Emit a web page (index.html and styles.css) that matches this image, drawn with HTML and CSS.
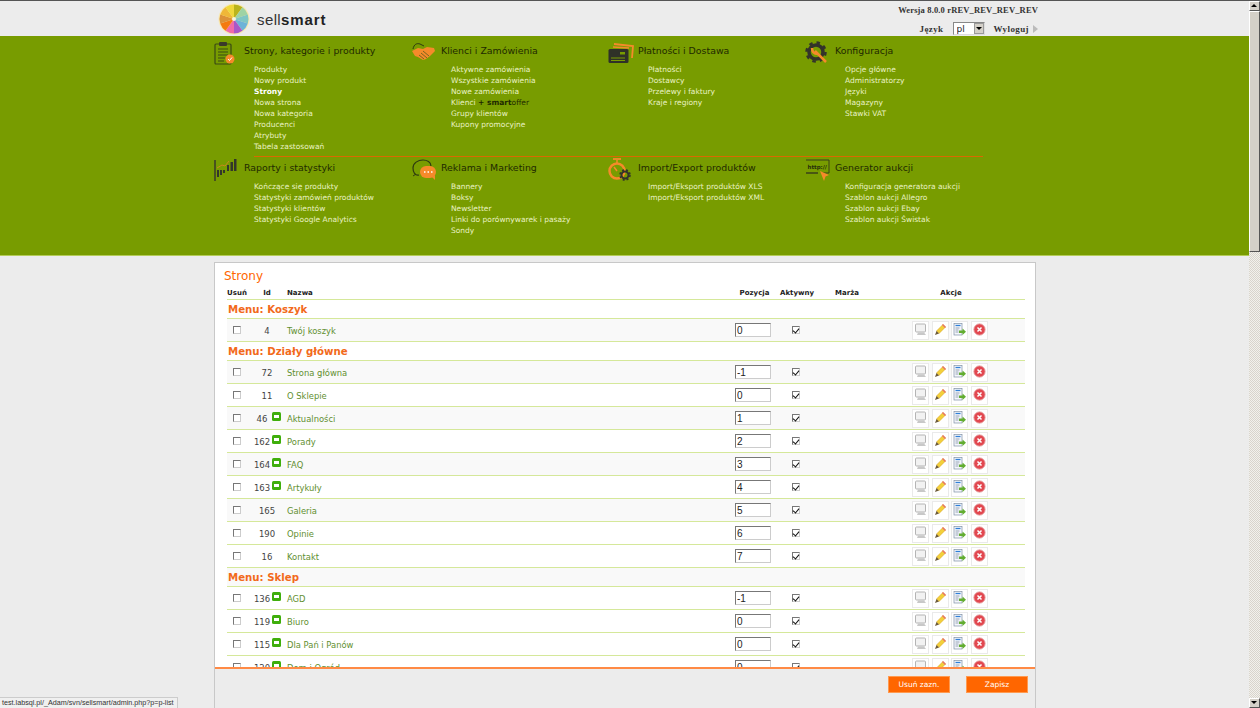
FILE: index.html
```html
<!DOCTYPE html>
<html lang="pl">
<head>
    <meta charset="UTF-8">
    <title>sellsmart - Strony</title>
    <link rel="stylesheet" href="styles.css">
</head>
<body>
    <svg class="sprites" width="0" height="0">
        <symbol id="i-comment" viewBox="0 0 13 13">
            <rect x="1.500" y="1" width="10" height="8" rx="1" fill="#f2f2f2" stroke="#b4b4b4"/>
            <path d="M4 9.500h6l2 2.500H3z" fill="#c8c8c8"/>
        </symbol>
        <symbol id="i-pencil" viewBox="0 0 13 13">
            <path d="M9 1.500l2.500 2.500-6.500 6.500L2.500 8z" fill="#f3d03a" stroke="#d8a520" stroke-width=".6"/>
            <path d="M9 1l3 3-1 1L8 2z" fill="#e8746a"/>
            <path d="M2.500 8l2.500 2.500L1 12z" fill="#6b5a3a"/>
        </symbol>
        <symbol id="i-move" viewBox="0 0 13 13">
            <rect x="1" y="0.500" width="8" height="11.500" fill="#f4f6fa" stroke="#7f90a6" stroke-width=".7"/>
            <path d="M2.500 2.500h5" stroke="#2f7fd8" stroke-width="1.300"/>
            <path d="M2.500 5h4M2.500 7h3M2.500 9h3" stroke="#7f90a6" stroke-width=".8"/>
            <path d="M6 7.500h3.500V5.500L13 8.700 9.500 12v-2H6z" fill="#62ad30"/>
        </symbol>
        <symbol id="i-delete" viewBox="0 0 13 13">
            <circle cx="6.500" cy="6.500" r="5.700" fill="#e2474f" stroke="#e8b0b0" stroke-width=".9"/>
            <path d="M4.500 4.500l4 4M8.500 4.500l-4 4" stroke="#fff" stroke-width="1.500"/>
        </symbol>
        <symbol id="i-sub" viewBox="0 0 9 9">
            <rect width="9" height="9" rx="1.500" fill="#3fae0c"/>
            <rect x="2" y="3" width="5" height="3" fill="#fff"/>
        </symbol>
    </svg>

    <div class="window">
        <div class="page">
            <header class="topbar">
                <div class="logo">
                    <svg class="logo-wheel" width="32" height="32" viewBox="0 0 32 32">
                        <circle cx="16" cy="16" r="15.500" fill="#f7e8b0"/>
                        <path d="M16 16L16 1.500A14.500 14.500 0 0 1 24.500 4.300z" fill="#b9b41c"/>
                        <path d="M16 16L24.500 4.300A14.500 14.500 0 0 1 29.800 11.500z" fill="#9ed3a4"/>
                        <path d="M16 16L29.800 11.500A14.500 14.500 0 0 1 29.800 20.500z" fill="#7fc6c4"/>
                        <path d="M16 16L29.800 20.500A14.500 14.500 0 0 1 24.500 27.700z" fill="#6db3d8"/>
                        <path d="M16 16L24.500 27.700A14.500 14.500 0 0 1 16 30.500z" fill="#a957c8"/>
                        <path d="M16 16L16 30.500A14.500 14.500 0 0 1 7.500 27.700z" fill="#f06aa8"/>
                        <path d="M16 16L7.500 27.700A14.500 14.500 0 0 1 2.200 20.500z" fill="#f47a10"/>
                        <path d="M16 16L2.200 20.500A14.500 14.500 0 0 1 2.200 11.500z" fill="#dc9238"/>
                        <path d="M16 16L2.200 11.500A14.500 14.500 0 0 1 7.500 4.300z" fill="#efb738"/>
                        <path d="M16 16L7.500 4.300A14.500 14.500 0 0 1 16 1.500z" fill="#efd83a"/>
                        <circle cx="16" cy="16" r="2" fill="#f7f3dc"/>
                    </svg>
                    <span class="logo-text">sell<b>smart</b></span>
                </div>
                <div class="top-right">
                    <div class="version">Wersja 8.0.0 rREV_REV_REV_REV</div>
                    <div class="top-actions">
                        <span>Język</span>
                        <div class="lang-select">
                            <select><option>pl</option></select>
                            <span class="lang-arrow"></span>
                        </div>
                        <a href="#">Wyloguj</a>
                        <span class="logout-arrow"></span>
                    </div>
                </div>
            </header>

            <nav class="mainnav">
                <div class="nav-row nav-row-first">
                    <div class="nav-group">
                        <div class="nav-title">
                            <svg width="26" height="24" viewBox="0 0 26 24" fill="none">
                                <rect x="1" y="3" width="16" height="20" rx="1" stroke="#3a4a14" stroke-width="1.200"/>
                                <rect x="5" y="1" width="8" height="4" rx="1" fill="#3a3a2a"/>
                                <path d="M4 8h10M4 11h10M4 14h10M4 17h7M4 20h6" stroke="#3a4a14"/>
                                <circle cx="16" cy="18" r="4.500" fill="#f58a2a"/>
                                <path d="M14 18l1.500 1.500 2.500-3" stroke="#fff"/>
                            </svg>
                            Strony, kategorie i produkty
                        </div>
                        <a href="#">Produkty</a>
                        <a href="#">Nowy produkt</a>
                        <a href="#" class="current">Strony</a>
                        <a href="#">Nowa strona</a>
                        <a href="#">Nowa kategoria</a>
                        <a href="#">Producenci</a>
                        <a href="#">Atrybuty</a>
                        <a href="#">Tabela zastosowań</a>
                    </div>
                    <div class="nav-group">
                        <div class="nav-title">
                            <svg width="26" height="24" viewBox="0 0 26 24" fill="none">
                                <path d="M2 8C3 3 6 2 9 3l4 2" stroke="#2f3a10"/>
                                <path d="M1 10l6-3 5 1 4-2 7 1 1 3-5 5-4 3-3 1-5-3-3-1z" fill="#f58a2a"/>
                                <path d="M10 12l6 5M12 10l6 5M8 14l5 4" stroke="#5a5a1a" stroke-width=".8"/>
                            </svg>
                            Klienci i Zamówienia
                        </div>
                        <a href="#">Aktywne zamówienia</a>
                        <a href="#">Wszystkie zamówienia</a>
                        <a href="#">Nowe zamówienia</a>
                        <a href="#">Klienci <span class="smart"><b>+ smart</b>offer</span></a>
                        <a href="#">Grupy klientów</a>
                        <a href="#">Kupony promocyjne</a>
                    </div>
                    <div class="nav-group">
                        <div class="nav-title">
                            <svg width="26" height="24" viewBox="0 0 26 24" fill="none">
                                <path d="M6 3l19 2-1 12" stroke="#f58a2a" stroke-width="1.800"/>
                                <path d="M5 6l16 1" stroke="#f58a2a" stroke-width="1.500"/>
                                <rect x="0.500" y="8" width="20" height="14" rx="1.500" fill="#2f3128"/>
                                <rect x="12" y="11" width="5" height="2.500" fill="#789c00"/>
                                <path d="M3 17h14M3 19.500h14" stroke="#789c00"/>
                            </svg>
                            Płatności i Dostawa
                        </div>
                        <a href="#">Płatności</a>
                        <a href="#">Dostawcy</a>
                        <a href="#">Przelewy i faktury</a>
                        <a href="#">Kraje i regiony</a>
                    </div>
                    <div class="nav-group">
                        <div class="nav-title">
                            <svg width="26" height="24" viewBox="0 0 26 24" fill="none">
                                <circle cx="11" cy="11" r="7" stroke="#33332a" stroke-width="3.500"/>
                                <circle cx="11" cy="11" r="9.500" stroke="#33332a" stroke-width="2.500" stroke-dasharray="3.500 4"/>
                                <path d="M10 10l11 11" stroke="#f58a2a" stroke-width="2.500"/>
                                <path d="M7 7c0 4 2 6 6 6" stroke="#f58a2a" stroke-width="2.500"/>
                            </svg>
                            Konfiguracja
                        </div>
                        <a href="#">Opcje główne</a>
                        <a href="#">Administratorzy</a>
                        <a href="#">Języki</a>
                        <a href="#">Magazyny</a>
                        <a href="#">Stawki VAT</a>
                    </div>
                </div>
                <div class="nav-divider"></div>
                <div class="nav-row">
                    <div class="nav-group">
                        <div class="nav-title">
                            <svg width="26" height="24" viewBox="0 0 26 24" fill="none">
                                <path d="M1 2v21" stroke="#3a3a2a" stroke-width="1.500"/>
                                <path d="M3 10l5-3 3 1 4-5" stroke="#c9861c"/>
                                <path d="M13 7h2v6h-2zM16.500 4h2.500v9h-2.500zM20 1h2.500v12H20z" fill="#33362a"/>
                                <path d="M3 12h2v7H3zM6 12h2v5H6zM9 12h2v3H9z" fill="#33362a"/>
                            </svg>
                            Raporty i statystyki
                        </div>
                        <a href="#">Kończące się produkty</a>
                        <a href="#">Statystyki zamówień produktów</a>
                        <a href="#">Statystyki klientów</a>
                        <a href="#">Statystyki Google Analytics</a>
                    </div>
                    <div class="nav-group">
                        <div class="nav-title">
                            <svg width="26" height="24" viewBox="0 0 26 24" fill="none">
                                <path d="M8 17c-4 1-6-3-6-7 0-5 5-8 10-8 4 0 8 2 8 6" stroke="#2f3a10" stroke-width="1.200"/>
                                <path d="M2 18l3-2" stroke="#2f3a10"/>
                                <rect x="9" y="8" width="16" height="12" rx="6" fill="#f58a2a"/>
                                <path d="M21 19l3 3v-5z" fill="#f58a2a"/>
                                <path d="M13 14h1.500M16.500 14H18M20 14h1.500" stroke="#fff" stroke-width="1.500"/>
                            </svg>
                            Reklama i Marketing
                        </div>
                        <a href="#">Bannery</a>
                        <a href="#">Boksy</a>
                        <a href="#">Newsletter</a>
                        <a href="#">Linki do porównywarek i pasaży</a>
                        <a href="#">Sondy</a>
                    </div>
                    <div class="nav-group">
                        <div class="nav-title">
                            <svg width="26" height="24" viewBox="0 0 26 24" fill="none">
                                <circle cx="9" cy="13" r="7.500" stroke="#f58a2a" stroke-width="2.500"/>
                                <path d="M5 1h8" stroke="#f58a2a" stroke-width="1.800"/>
                                <path d="M9 2v3M9 13L6 9" stroke="#f58a2a" stroke-width="1.500"/>
                                <circle cx="17" cy="17" r="3.500" stroke="#33332a" stroke-width="2"/>
                                <circle cx="17" cy="17" r="5" stroke="#33332a" stroke-width="1.500" stroke-dasharray="2 2"/>
                            </svg>
                            Import/Export produktów
                        </div>
                        <a href="#">Import/Eksport produktów XLS</a>
                        <a href="#">Import/Eksport produktów XML</a>
                    </div>
                    <div class="nav-group">
                        <div class="nav-title">
                            <svg width="26" height="24" viewBox="0 0 26 24" fill="none">
                                <path d="M1 2h23v13H17M13 15H1z" stroke="#3a4018"/>
                                <text x="2.500" y="11" class="http-text">http://</text>
                                <path d="M15 13l9 4-3.500 1.500L19 23z" fill="#f58a2a"/>
                            </svg>
                            Generator aukcji
                        </div>
                        <a href="#">Konfiguracja generatora aukcji</a>
                        <a href="#">Szablon aukcji Allegro</a>
                        <a href="#">Szablon aukcji Ebay</a>
                        <a href="#">Szablon aukcji Świstak</a>
                    </div>
                </div>
            </nav>

            <main class="card">
                <h1 class="card-title">Strony</h1>
                <div class="list">
                    <div class="row head">
                        <span>Usuń</span>
                        <span>Id</span>
                        <span class="left">Nazwa</span>
                        <span>Pozycja</span>
                        <span>Aktywny</span>
                        <span>Marża</span>
                        <span>Akcje</span>
                    </div>

                    <div class="section">Menu: Koszyk</div>
                    <div class="row odd">
                        <span><input type="checkbox"></span>
                        <span class="id">4</span>
                        <a href="#" class="left">Twój koszyk</a>
                        <span><input class="pos" value="0"></span>
                        <span><input type="checkbox" checked></span>
                        <span></span>
                        <span class="actions"><i><svg><use href="#i-comment"/></svg></i><i><svg><use href="#i-pencil"/></svg></i><i><svg><use href="#i-move"/></svg></i><i><svg><use href="#i-delete"/></svg></i></span>
                    </div>

                    <div class="section">Menu: Działy główne</div>
                    <div class="row odd">
                        <span><input type="checkbox"></span>
                        <span class="id">72</span>
                        <a href="#" class="left">Strona główna</a>
                        <span><input class="pos" value="-1"></span>
                        <span><input type="checkbox" checked></span>
                        <span></span>
                        <span class="actions"><i><svg><use href="#i-comment"/></svg></i><i><svg><use href="#i-pencil"/></svg></i><i><svg><use href="#i-move"/></svg></i><i><svg><use href="#i-delete"/></svg></i></span>
                    </div>
                    <div class="row">
                        <span><input type="checkbox"></span>
                        <span class="id">11</span>
                        <a href="#" class="left">O Sklepie</a>
                        <span><input class="pos" value="0"></span>
                        <span><input type="checkbox" checked></span>
                        <span></span>
                        <span class="actions"><i><svg><use href="#i-comment"/></svg></i><i><svg><use href="#i-pencil"/></svg></i><i><svg><use href="#i-move"/></svg></i><i><svg><use href="#i-delete"/></svg></i></span>
                    </div>
                    <div class="row odd">
                        <span><input type="checkbox"></span>
                        <span class="id has-sub">46<svg><use href="#i-sub"/></svg></span>
                        <a href="#" class="left">Aktualności</a>
                        <span><input class="pos" value="1"></span>
                        <span><input type="checkbox" checked></span>
                        <span></span>
                        <span class="actions"><i><svg><use href="#i-comment"/></svg></i><i><svg><use href="#i-pencil"/></svg></i><i><svg><use href="#i-move"/></svg></i><i><svg><use href="#i-delete"/></svg></i></span>
                    </div>
                    <div class="row">
                        <span><input type="checkbox"></span>
                        <span class="id has-sub">162<svg><use href="#i-sub"/></svg></span>
                        <a href="#" class="left">Porady</a>
                        <span><input class="pos" value="2"></span>
                        <span><input type="checkbox" checked></span>
                        <span></span>
                        <span class="actions"><i><svg><use href="#i-comment"/></svg></i><i><svg><use href="#i-pencil"/></svg></i><i><svg><use href="#i-move"/></svg></i><i><svg><use href="#i-delete"/></svg></i></span>
                    </div>
                    <div class="row odd">
                        <span><input type="checkbox"></span>
                        <span class="id has-sub">164<svg><use href="#i-sub"/></svg></span>
                        <a href="#" class="left">FAQ</a>
                        <span><input class="pos" value="3"></span>
                        <span><input type="checkbox" checked></span>
                        <span></span>
                        <span class="actions"><i><svg><use href="#i-comment"/></svg></i><i><svg><use href="#i-pencil"/></svg></i><i><svg><use href="#i-move"/></svg></i><i><svg><use href="#i-delete"/></svg></i></span>
                    </div>
                    <div class="row">
                        <span><input type="checkbox"></span>
                        <span class="id has-sub">163<svg><use href="#i-sub"/></svg></span>
                        <a href="#" class="left">Artykuły</a>
                        <span><input class="pos" value="4"></span>
                        <span><input type="checkbox" checked></span>
                        <span></span>
                        <span class="actions"><i><svg><use href="#i-comment"/></svg></i><i><svg><use href="#i-pencil"/></svg></i><i><svg><use href="#i-move"/></svg></i><i><svg><use href="#i-delete"/></svg></i></span>
                    </div>
                    <div class="row odd">
                        <span><input type="checkbox"></span>
                        <span class="id">165</span>
                        <a href="#" class="left">Galeria</a>
                        <span><input class="pos" value="5"></span>
                        <span><input type="checkbox" checked></span>
                        <span></span>
                        <span class="actions"><i><svg><use href="#i-comment"/></svg></i><i><svg><use href="#i-pencil"/></svg></i><i><svg><use href="#i-move"/></svg></i><i><svg><use href="#i-delete"/></svg></i></span>
                    </div>
                    <div class="row">
                        <span><input type="checkbox"></span>
                        <span class="id">190</span>
                        <a href="#" class="left">Opinie</a>
                        <span><input class="pos" value="6"></span>
                        <span><input type="checkbox" checked></span>
                        <span></span>
                        <span class="actions"><i><svg><use href="#i-comment"/></svg></i><i><svg><use href="#i-pencil"/></svg></i><i><svg><use href="#i-move"/></svg></i><i><svg><use href="#i-delete"/></svg></i></span>
                    </div>
                    <div class="row">
                        <span><input type="checkbox"></span>
                        <span class="id">16</span>
                        <a href="#" class="left">Kontakt</a>
                        <span><input class="pos" value="7"></span>
                        <span><input type="checkbox" checked></span>
                        <span></span>
                        <span class="actions"><i><svg><use href="#i-comment"/></svg></i><i><svg><use href="#i-pencil"/></svg></i><i><svg><use href="#i-move"/></svg></i><i><svg><use href="#i-delete"/></svg></i></span>
                    </div>

                    <div class="section tinted">Menu: Sklep</div>
                    <div class="row">
                        <span><input type="checkbox"></span>
                        <span class="id has-sub">136<svg><use href="#i-sub"/></svg></span>
                        <a href="#" class="left">AGD</a>
                        <span><input class="pos" value="-1"></span>
                        <span><input type="checkbox" checked></span>
                        <span></span>
                        <span class="actions"><i><svg><use href="#i-comment"/></svg></i><i><svg><use href="#i-pencil"/></svg></i><i><svg><use href="#i-move"/></svg></i><i><svg><use href="#i-delete"/></svg></i></span>
                    </div>
                    <div class="row">
                        <span><input type="checkbox"></span>
                        <span class="id has-sub">119<svg><use href="#i-sub"/></svg></span>
                        <a href="#" class="left">Biuro</a>
                        <span><input class="pos" value="0"></span>
                        <span><input type="checkbox" checked></span>
                        <span></span>
                        <span class="actions"><i><svg><use href="#i-comment"/></svg></i><i><svg><use href="#i-pencil"/></svg></i><i><svg><use href="#i-move"/></svg></i><i><svg><use href="#i-delete"/></svg></i></span>
                    </div>
                    <div class="row">
                        <span><input type="checkbox"></span>
                        <span class="id has-sub">115<svg><use href="#i-sub"/></svg></span>
                        <a href="#" class="left">Dla Pań i Panów</a>
                        <span><input class="pos" value="0"></span>
                        <span><input type="checkbox" checked></span>
                        <span></span>
                        <span class="actions"><i><svg><use href="#i-comment"/></svg></i><i><svg><use href="#i-pencil"/></svg></i><i><svg><use href="#i-move"/></svg></i><i><svg><use href="#i-delete"/></svg></i></span>
                    </div>
                    <div class="row">
                        <span><input type="checkbox"></span>
                        <span class="id has-sub">120<svg><use href="#i-sub"/></svg></span>
                        <a href="#" class="left">Dom i Ogród</a>
                        <span><input class="pos" value="0"></span>
                        <span><input type="checkbox" checked></span>
                        <span></span>
                        <span class="actions"><i><svg><use href="#i-comment"/></svg></i><i><svg><use href="#i-pencil"/></svg></i><i><svg><use href="#i-move"/></svg></i><i><svg><use href="#i-delete"/></svg></i></span>
                    </div>
                </div>
                <footer class="card-foot">
                    <button class="btn">Usuń zazn.</button>
                    <button class="btn">Zapisz</button>
                </footer>
            </main>
        </div>

        <div class="scrollbar">
            <div class="sb-btn sb-up"></div>
            <div class="sb-thumb"></div>
            <div class="sb-track"></div>
            <div class="sb-btn sb-down"></div>
        </div>
    </div>

    <div class="status">test.labsql.pl/_Adam/svn/sellsmart/admin.php?p=p-list</div>
</body>
</html>
```

FILE: styles.css
```css
:root {
    --green: #789c00;
    --orange: #ff6600;
    --line: #d5e89a;
    --bg: #ececec;
}
* { box-sizing: border-box; }
html, body {
    margin: 0;
    height: 708px;
    overflow: hidden;
}
body {
    font-family: 'DejaVu Sans', Verdana, sans-serif;
    font-size: 8px;
    background: var(--bg);
    color: #333;
}
a { text-decoration: none; }
.sprites { position: absolute; }
.window {
    display: flex;
    height: 708px;
}
.page {
    flex: 1;
    min-width: 0;
    display: flex;
    flex-direction: column;
    border-top: 1px solid #555;
}

/* top bar */
.topbar {
    height: 35px;
    display: flex;
    justify-content: space-between;
    padding: 0 211px 0 218px;
    flex: none;
}
.logo {
    display: flex;
    align-items: center;
    gap: 7px;
    margin-top: 1px;
    height: 34px;
}
.logo-text {
    font-family: 'Liberation Sans', Arial, sans-serif;
    font-size: 15px;
    letter-spacing: 0.4px;
    color: #333;
}
.logo-text b { color: #222; letter-spacing: 0.9px; }
.top-right {
    color: #333;
    text-align: right;
    font-family: 'Liberation Serif', serif;
    font-weight: 700;
    font-size: 8.500px;
    letter-spacing: 0.15px;
}
.version {
    margin-top: 4px;
    line-height: 11px;
}
.top-actions {
    display: flex;
    justify-content: flex-end;
    align-items: center;
    gap: 9px;
    margin-top: 6px;
    font-size: 9px;
    letter-spacing: 0.4px;
}
.top-actions a { color: #333; }
.lang-select {
    position: relative;
    width: 32px;
    height: 13px;
}
.lang-select select {
    appearance: none;
    display: block;
    width: 100%;
    height: 100%;
    border: 1px solid #888;
    border-right-color: #ddd;
    border-bottom-color: #ddd;
    border-radius: 0;
    background: #fff;
    padding: 0 0 0 3px;
    font-family: 'DejaVu Sans', sans-serif;
    font-size: 9px;
    color: #222;
}
.lang-arrow {
    position: absolute;
    right: 1px;
    top: 1px;
    width: 10px;
    height: 11px;
    background: #d4d0c8;
    border: 1px solid #999;
}
.lang-arrow::after {
    content: '';
    position: absolute;
    left: 1px;
    top: 3px;
    border: 3px solid transparent;
    border-top-color: #000;
}
.logout-arrow {
    width: 0;
    height: 0;
    margin-left: -5px;
    border: 4px solid transparent;
    border-left: 5px solid #bbb;
    border-right: 0;
}

/* main menu */
.mainnav {
    height: 220px;
    flex: none;
    background: var(--green);
    border-bottom: 1px solid #b4cc58;
    padding: 8px 0 0 214px;
}
.nav-row {
    display: flex;
}
.nav-row-first {
    height: 112px;
}
.nav-divider {
    width: 729px;
    height: 1px;
    margin-left: 40px;
    margin-bottom: 4px;
    background: #d96a00;
}
.nav-group {
    width: 197px;
    flex: none;
    padding-left: 40px;
}
.nav-title {
    position: relative;
    height: 16px;
    line-height: 14px;
    margin: 0 0 4px -10px;
    font-size: 9.400px;
    color: #1f2a00;
    white-space: nowrap;
}
.nav-title svg {
    position: absolute;
    left: -30px;
    top: -3px;
}
.nav-group > a {
    display: block;
    height: 11px;
    line-height: 11px;
    font-size: 7.500px;
    color: #e9f2c4;
    white-space: nowrap;
}
.nav-group > a.current {
    color: #fff;
    font-weight: 700;
}
.smart { color: #1f2a00; }
.http-text {
    font-family: 'DejaVu Sans', sans-serif;
    font-size: 5.500px;
    font-weight: 700;
    fill: #26300a;
}

/* content card */
.card {
    flex: 1;
    min-height: 0;
    width: 822px;
    margin: 6px 0 0 214px;
    background: #fff;
    border: 1px solid #c8c8c8;
    border-bottom: 0;
    display: flex;
    flex-direction: column;
}
.card-title {
    margin: 0;
    padding: 6px 0 0 9px;
    height: 24px;
    flex: none;
    font-size: 12px;
    line-height: 14px;
    font-weight: 400;
    color: var(--orange);
}
.list {
    flex: 1;
    min-height: 0;
    overflow: hidden;
    margin: 0 10px 0 12px;
}
.row {
    display: grid;
    grid-template-columns: 20px 40px 448px 40px 46px 55px 1fr;
    align-items: center;
    height: 23px;
    border-bottom: 1px solid var(--line);
    text-align: center;
}
.row.odd { background: #f9f9f9; }
.row.head {
    height: 13px;
    font-weight: 700;
    font-size: 7px;
    color: #222;
    line-height: 9px;
}
.row.head span:nth-child(4) { margin-left: -1px; }
.row.head span:nth-child(5) { text-align: left; padding-left: 5px; }
.row.head span:nth-child(6) { text-align: left; padding-left: 14px; }
.row.head span:nth-child(7) { margin-left: 20px; width: 110px; }
.row .left {
    text-align: left;
    padding-top: 1px;
}
.row a {
    color: #5f8f2f;
    font-size: 8.400px;
}
.id {
    display: block;
    position: relative;
    color: #444;
    font-size: 8.500px;
    padding-top: 1px;
}
.has-sub { padding-right: 10px; }
.has-sub svg {
    position: absolute;
    right: 6px;
    top: -1px;
    width: 9px;
    height: 9px;
}
.section {
    height: 19px;
    line-height: 20px;
    padding-left: 1px;
    font-size: 10.200px;
    font-weight: 700;
    color: #f26a1b;
    border-bottom: 1px solid var(--line);
}
.section.tinted { background: #f9f9f9; }
input[type=checkbox] {
    appearance: none;
    display: inline-block;
    position: relative;
    width: 8px;
    height: 8px;
    margin: 0;
    vertical-align: middle;
    background: #fff;
    border: 1px solid #777;
    border-right-color: #ccc;
    border-bottom-color: #ccc;
}
.row span:nth-child(5) input[type=checkbox] {
    margin-right: 4px;
}
input[type=checkbox]:checked::after {
    content: '';
    position: absolute;
    left: 1px;
    top: 0;
    width: 3px;
    height: 5px;
    border: solid #111;
    border-width: 0 1.500px 1.500px 0;
    transform: rotate(40deg);
}
.pos {
    display: block;
    width: 36px;
    height: 14px;
    padding: 0 1px;
    border: 1px solid #ccc;
    border-top-color: #777;
    border-left-color: #777;
    font-family: 'Liberation Sans', Arial, sans-serif;
    font-size: 10px;
    color: #222;
    background: #fff;
}
.actions {
    display: flex;
    gap: 2.700px;
    padding-left: 36px;
}
.actions i {
    display: flex;
    align-items: center;
    justify-content: center;
    width: 17px;
    height: 19px;
    padding-bottom: 2px;
    background: #fff;
    border: 1px solid #eaeaea;
}
.actions svg {
    width: 13px;
    height: 13px;
}
.card-foot {
    height: 41px;
    flex: none;
    background: var(--bg);
    border-top: 2px solid #ff8a45;
    display: flex;
    justify-content: flex-end;
    gap: 16px;
    padding: 7px 7px 0 0;
}
.btn {
    width: 62px;
    height: 17px;
    padding: 0;
    border: 1px solid #ff9a50;
    background: var(--orange);
    color: #fff;
    font-family: 'DejaVu Sans', Verdana, sans-serif;
    font-size: 7.500px;
    font-weight: 400;
}

/* window scrollbar */
.scrollbar {
    width: 11px;
    flex: none;
    display: flex;
    flex-direction: column;
    background: #f0efe9;
    border-top: 1px solid #555;
}
.sb-btn {
    position: relative;
    height: 10px;
    flex: none;
    background: #d4d0c8;
    border: 1px solid #fff;
    border-right-color: #555;
    border-bottom-color: #555;
}
.sb-btn::after {
    content: '';
    position: absolute;
    left: 1px;
    border: 3px solid transparent;
}
.sb-up::after { top: -1px; border-bottom-color: #000; }
.sb-down::after { top: 2px; border-top-color: #000; }
.sb-thumb {
    height: 241px;
    flex: none;
    background: #d4d0c8;
    border: 1px solid #fff;
    border-right-color: #555;
    border-bottom-color: #555;
}
.sb-track {
    flex: 1;
    background: repeating-conic-gradient(#d8d4cc 0 25%, #f2f1ec 0 50%) 0 0 / 2px 2px;
}

/* link preview at the bottom of the window */
.status {
    position: absolute;
    left: 0;
    bottom: 0;
    width: 178px;
    height: 11px;
    padding-left: 2px;
    background: #f0f0f0;
    border: 1px solid #ccc;
    border-width: 1px 1px 0 0;
    font-family: 'Liberation Sans', Arial, sans-serif;
    font-size: 7.200px;
    line-height: 10px;
    color: #333;
    white-space: nowrap;
    overflow: hidden;
}
```
